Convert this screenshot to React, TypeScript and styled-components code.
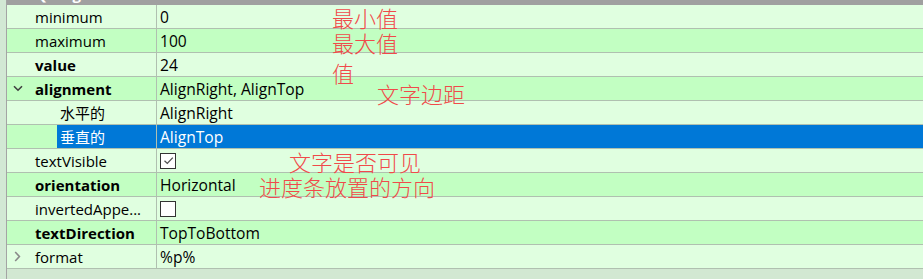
import React from 'react';
import styled, {createGlobalStyle, css} from 'styled-components';

type Prop = {
    name: string
    value?: string
    check?: boolean
    bold?: boolean
    level?: number
    branch?: 'open' | 'closed'
    selected?: boolean
};

const props: Prop[] = [
    {name: 'minimum', value: '0'},
    {name: 'maximum', value: '100'},
    {name: 'value', value: '24', bold: true},
    {name: 'alignment', value: 'AlignRight, AlignTop', bold: true, branch: 'open'},
    {name: '水平的', value: 'AlignRight', level: 1},
    {name: '垂直的', value: 'AlignTop', level: 1, selected: true},
    {name: 'textVisible', check: true},
    {name: 'orientation', value: 'Horizontal', bold: true},
    {name: 'invertedAppe...', check: false},
    {name: 'textDirection', value: 'TopToBottom', bold: true},
    {name: 'format', value: '%p%', branch: 'closed'},
];

// red hand-written notes over the editor
const notes = [
    {text: '最小值', x: 332, y: 6},
    {text: '最大值', x: 332, y: 31},
    {text: '值', x: 332, y: 61},
    {text: '文字边距', x: 377, y: 82},
    {text: '文字是否可见', x: 289, y: 150},
    {text: '进度条放置的方向', x: 259, y: 175},
];

export default function App() {
    return (
        <>
            <GlobalStyle/>
            <Page>
                <Strip/>
                <Editor>
                    <Header><HeaderText>QProgressBar</HeaderText></Header>
                    {props.map((p, i) => (
                        <Row key={p.name} dark={i % 2 === 1}>
                            <NameCell>
                                <Branch level={p.level || 0}>
                                    {p.branch === 'open' && (
                                        <svg width="10" height="7" viewBox="0 0 10 7">
                                            <path d="M1 1.2 L5 5.2 L9 1.2" fill="none" stroke="#404040" strokeWidth="1.6"/>
                                        </svg>
                                    )}
                                    {p.branch === 'closed' && (
                                        <svg width="7" height="11" viewBox="0 0 7 11">
                                            <path d="M1.2 1 L5.4 5.5 L1.2 10" fill="none" stroke="#8a8a8a" strokeWidth="1.6"/>
                                        </svg>
                                    )}
                                </Branch>
                                <Label bold={p.bold} selected={p.selected}>{p.name}</Label>
                            </NameCell>
                            <ValueCell selected={p.selected}>
                                {p.check === undefined ? p.value : (
                                    <Check>
                                        {p.check && (
                                            <svg width="13" height="13" viewBox="0 0 13 13">
                                                <path d="M2.5 6.8 L5.3 9.4 L10.8 3.6" fill="none" stroke="#505050" strokeWidth="1.3"/>
                                            </svg>
                                        )}
                                    </Check>
                                )}
                            </ValueCell>
                        </Row>
                    ))}
                    <Filler/>
                </Editor>
                {notes.map((n) => (
                    <Note key={n.text} style={{left: n.x, top: n.y}}>{n.text}</Note>
                ))}
            </Page>
        </>
    );
}

const GlobalStyle = createGlobalStyle`
  html, body {
    margin: 0;
    padding: 0;
    background: #d2e8d2;
  }
`;

const Page = styled.div`
  position: relative;
  display: flex;
  width: 923px;
  height: 279px;
  overflow: hidden;
  font-family: "Open Sans", "Noto Sans", "Noto Sans CJK SC", sans-serif;
  font-size: 15px;
  color: #000;
`;

const Strip = styled.div`
  width: 6px;
  background: #d2e8d4;
  border-right: 1px solid #a4a4a4;
`;

const Editor = styled.div`
  flex: 1;
  display: flex;
  flex-direction: column;
`;

const Header = styled.div`
  height: 5px;
  background: #a0a0a0;
  overflow: hidden;
  padding-left: 28px;
`;

const HeaderText = styled.div`
  margin-top: -15px;
  line-height: 18px;
  font-weight: 700;
  color: #fff;
`;

const Row = styled.div<{ dark: boolean }>`
  display: flex;
  height: 23px;
  border-bottom: 1px solid #b0c0b0;
  background: ${(p) => (p.dark ? '#c2ffc2' : '#e0ffe0')};
`;

const NameCell = styled.div`
  display: flex;
  width: 149px;
`;

const Branch = styled.div<{ level: number }>`
  display: flex;
  align-items: center;
  justify-content: center;
  flex: none;
  width: ${(p) => (p.level ? 50 : 25)}px;
  padding-right: ${(p) => (p.level ? 0 : 4)}px;
  box-sizing: border-box;
`;

const Label = styled.div<{ bold?: boolean, selected?: boolean }>`
  flex: 1;
  display: flex;
  align-items: center;
  padding-left: 3px;
  white-space: nowrap;
  overflow: hidden;
  font-weight: ${(p) => (p.bold ? 700 : 400)};
  ${(p) => p.selected && css`
    background: #0078d7;
    color: #fff;
  `}
`;

const ValueCell = styled.div<{ selected?: boolean }>`
  flex: 1;
  display: flex;
  align-items: center;
  padding-left: 3px;
  border-left: 1px solid #b0c0b0;
  white-space: nowrap;
  font-size: 15.6px;
  ${(p) => p.selected && css`
    background: #0078d7;
    color: #fff;
  `}
`;

const Check = styled.div`
  width: 14px;
  height: 14px;
  border: 1px solid #333;
  background: #fff;
  display: flex;
  align-items: center;
  justify-content: center;
`;

const Filler = styled.div`
  flex: 1;
  background: #d2e8d2;
`;

const Note = styled.div`
  position: absolute;
  font-family: "Noto Sans CJK SC", sans-serif;
  font-weight: 300;
  font-size: 22px;
  line-height: 22px;
  color: #f04a4a;
  white-space: nowrap;
`;
